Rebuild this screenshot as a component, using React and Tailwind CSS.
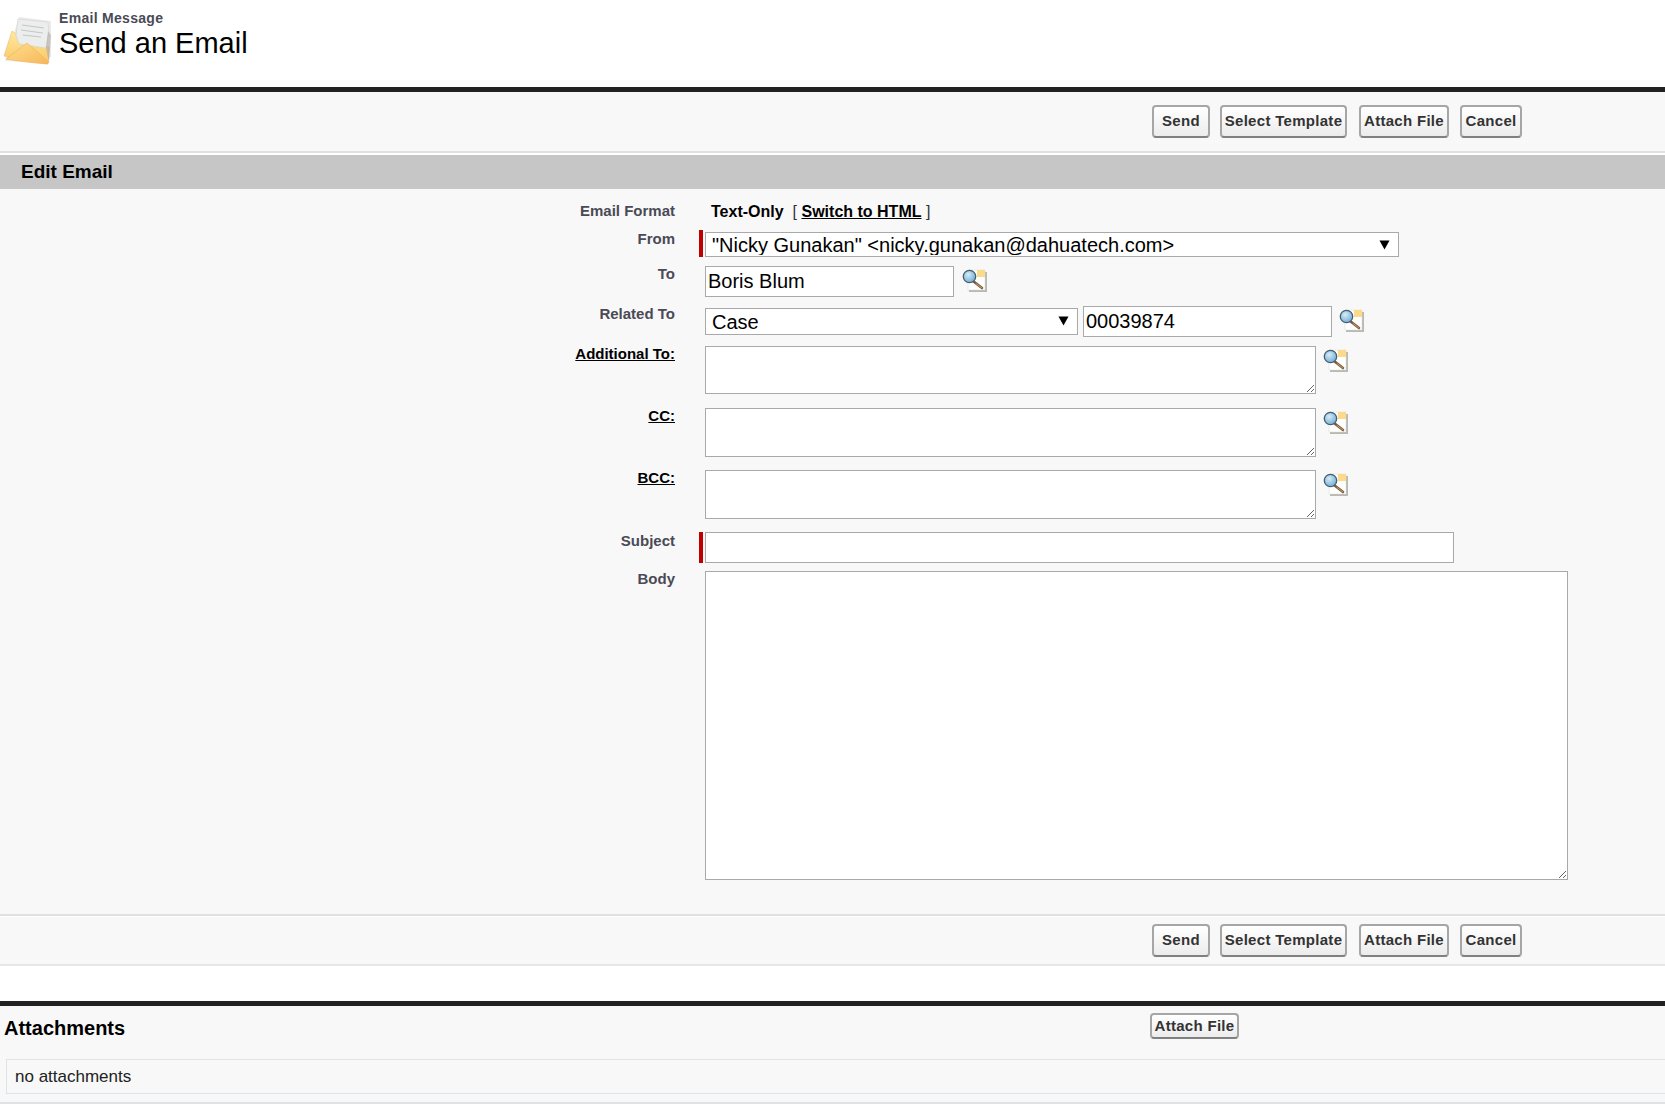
import { useId } from 'react'

const font = { fontFamily: '"Liberation Sans", Arial, sans-serif' }

function EnvelopeIcon() {
  return (
    <svg width="50" height="50" viewBox="0 0 50 50" className="shrink-0">
      <defs>
        <linearGradient id="env-back" x1="0" y1="0" x2="0" y2="1">
          <stop offset="0" stopColor="#ffe9a0" />
          <stop offset="1" stopColor="#f9c765" />
        </linearGradient>
        <linearGradient id="env-front" x1="0" y1="0" x2="1" y2="1">
          <stop offset="0" stopColor="#ffe08c" />
          <stop offset="1" stopColor="#f6b65a" />
        </linearGradient>
        <filter id="env-soft" x="-10%" y="-10%" width="120%" height="120%">
          <feGaussianBlur stdDeviation="0.45" />
        </filter>
      </defs>
      <g filter="url(#env-soft)">
        <path d="M16 2 L48 6 L48 42 L40 48 L2 46 Z" fill="#c9c6c0" opacity="0.35" />
        <path d="M1 41 L9 16 L24 27 L46 32 L45 49 Z" fill="url(#env-back)" stroke="#efb866" strokeWidth="0.6" />
        <path d="M15 4 L45 7 L46 16 L43 33 L16 29 L13 20 Z" fill="#eceded" stroke="#cfd0d0" strokeWidth="0.6" />
        <path d="M19 10 L41 13 M18 15 L40 18 M20 20 L38 22" stroke="#c3c6c9" strokeWidth="1.2" fill="none" />
        <path d="M45 16 L48 20 L46 48 L43 33 Z" fill="#a8a6a0" opacity="0.55" />
        <path d="M3 44 L24 28 L46 47 L44 49 Q20 47 3 44 Z" fill="url(#env-front)" stroke="#eeae5c" strokeWidth="0.6" />
      </g>
    </svg>
  )
}

function LookupIcon() {
  const uid = useId()
  const glass = `glass-${uid}`
  return (
    <svg width="25" height="23" viewBox="0 0 25 23" className="shrink-0">
      <defs>
        <radialGradient id={glass} cx="0.4" cy="0.35" r="0.7">
          <stop offset="0" stopColor="#d6ecf8" />
          <stop offset="1" stopColor="#6fa9d4" />
        </radialGradient>
      </defs>
      <rect x="7" y="3" width="18" height="20" fill="#b9b9b3" />
      <rect x="6" y="1" width="17" height="20" fill="#ffffff" stroke="#d8d8d2" strokeWidth="0.5" />
      <rect x="15" y="1" width="8" height="7" fill="#fdd98c" />
      <path d="M11 12 L20 19" stroke="#7b5a3a" strokeWidth="2.6" strokeLinecap="round" />
      <path d="M14 14.5 L20 19" stroke="#c49a6a" strokeWidth="1" strokeLinecap="round" />
      <circle cx="7.5" cy="7.5" r="6.2" fill={`url(#${glass})`} stroke="#44606f" strokeWidth="1.3" />
    </svg>
  )
}

function SfButton({ children, className = '' }) {
  return (
    <button
      type="button"
      className={`rounded-[4px] border-2 border-[#a6a6a6] border-b-[#808080] bg-gradient-to-b from-white to-[#ececec] text-[15px] font-bold tracking-[0.3px] text-[#333333] ${className}`}
      style={font}
    >
      {children}
    </button>
  )
}

function ButtonBar() {
  return (
    <div className="flex h-[33px] items-stretch pl-[1152px]">
      <SfButton className="w-[58px]">Send</SfButton>
      <SfButton className="ml-[10px] w-[127px]">Select Template</SfButton>
      <SfButton className="ml-[12px] w-[90px]">Attach File</SfButton>
      <SfButton className="ml-[11px] w-[62px]">Cancel</SfButton>
    </div>
  )
}

function Row({ label, underline, required, className = '', children }) {
  return (
    <div className={`flex items-start ${className}`}>
      <div
        className={`w-[675px] shrink-0 text-right text-[15px] font-bold leading-[18px] ${
          underline ? 'text-black underline' : 'text-[#4a4a56]'
        }`}
      >
        {label}
      </div>
      <div className={`ml-[24px] mr-[2px] w-1 shrink-0 self-stretch ${required ? 'bg-[#c00000]' : ''}`} />
      {children}
    </div>
  )
}

function SfSelect({ value, className = '' }) {
  return (
    <div className={`relative ${className}`}>
      <select
        defaultValue={value}
        className="h-full w-full appearance-none rounded-none border border-[#a9a9a9] bg-white pl-[6px] text-[20px] leading-none text-black outline-none"
      >
        <option value={value}>{value}</option>
      </select>
      <svg width="11" height="10" viewBox="0 0 11 10" className="pointer-events-none absolute right-[9px] top-[8px]">
        <path d="M0.5 0.5 H10.5 L5.5 9.5 Z" fill="#000000" />
      </svg>
    </div>
  )
}

function SfInput({ value, className = '' }) {
  return (
    <input
      type="text"
      defaultValue={value}
      className={`rounded-none border border-[#a9a9a9] bg-white px-[2px] text-[20px] text-black outline-none ${className}`}
    />
  )
}

function SfTextarea({ className = '' }) {
  return <textarea className={`block rounded-none border border-[#a9a9a9] bg-white outline-none ${className}`} />
}

export default function App() {
  return (
    <div className="min-h-[1114px] bg-white" style={font}>
      {/* Page title */}
      <div className="flex h-[87px] items-start pl-[3px] pt-[15px]">
        <EnvelopeIcon />
        <div className="ml-[6px] -mt-[6px]">
          <div className="text-[14px] font-bold leading-[18px] tracking-[0.3px] text-[#4a4a56]">Email Message</div>
          <h1 className="text-[29px] leading-[32px] text-black">Send an Email</h1>
        </div>
      </div>

      {/* Edit block */}
      <div className="border-t-[5px] border-[#222222] bg-[#f8f8f8]">
        <div className="h-[59px] pt-[13px]">
          <ButtonBar />
        </div>
        <div className="h-[2px] bg-[#e0e0e0]" />
        <div className="h-[2px] bg-white" />
        <div className="h-[34px] bg-[#c6c6c6] pl-[21px] text-[19px] font-bold leading-[34px] text-black">Edit Email</div>

        <div className="pb-[34px] pt-[13px]">
          <Row label="Email Format" className="h-[28px]">
            <div className="pl-[6px] text-[16px] font-bold leading-[20px] text-black">
              Text-Only
              <span className="ml-[9px] font-normal text-[#333333]">[ </span>
              <a href="#" className="underline">Switch to HTML</a>
              <span className="font-normal text-[#333333]"> ]</span>
            </div>
          </Row>
          <Row label="From" required className="mb-[8px]">
            <SfSelect value={'"Nicky Gunakan" <nicky.gunakan@dahuatech.com>'} className="mt-[2px] h-[25px] w-[694px]" />
          </Row>
          <Row label="To" className="mb-[8px]">
            <SfInput value="Boris Blum" className="mt-px h-[31px] w-[249px]" />
            <div className="ml-[8px] mt-[4px]"><LookupIcon /></div>
          </Row>
          <Row label="Related To" className="mb-[8px]">
            <SfSelect value="Case" className="mt-[3px] h-[27px] w-[373px]" />
            <SfInput value="00039874" className="ml-[5px] mt-px h-[31px] w-[249px]" />
            <div className="ml-[7px] mt-[4px]"><LookupIcon /></div>
          </Row>
          <Row label="Additional To:" underline className="mb-[13px]">
            <SfTextarea className="mt-px h-[48px] w-[611px]" />
            <div className="ml-[7px] mt-[4px]"><LookupIcon /></div>
          </Row>
          <Row label="CC:" underline className="mb-[12px]">
            <SfTextarea className="mt-px h-[49px] w-[611px]" />
            <div className="ml-[7px] mt-[4px]"><LookupIcon /></div>
          </Row>
          <Row label="BCC:" underline className="mb-[13px]">
            <SfTextarea className="mt-px h-[49px] w-[611px]" />
            <div className="ml-[7px] mt-[4px]"><LookupIcon /></div>
          </Row>
          <Row label="Subject" required className="mb-[7px]">
            <SfInput value="" className="h-[31px] w-[749px]" />
          </Row>
          <Row label="Body">
            <SfTextarea className="mt-px h-[309px] w-[863px]" />
          </Row>
        </div>

        <div className="h-[2px] bg-[#e0e0e0]" />
        <div className="h-px bg-white" />
        <div className="h-[47px] pt-[7px]">
          <ButtonBar />
        </div>
        <div className="h-[2px] bg-[#e6e6e6]" />
      </div>

      <div className="h-[35px] bg-white" />

      {/* Attachments */}
      <div className="h-[103px] border-b-2 border-t-[5px] border-b-[#e0e3e5] border-t-[#222222] bg-[#f8f8f8]">
        <div className="flex h-[53px] items-start">
          <h2 className="ml-1 mt-[10px] text-[20px] font-bold leading-[24px] text-black">Attachments</h2>
          <SfButton className="absolute left-[1150px] top-[1013px] h-[26px] w-[89px]">Attach File</SfButton>
        </div>
        <div className="ml-[6px] h-[35px] border border-r-0 border-[#e0e3e5] pl-2 text-[17px] leading-[33px] text-[#222222]">
          no attachments
        </div>
      </div>
    </div>
  )
}
